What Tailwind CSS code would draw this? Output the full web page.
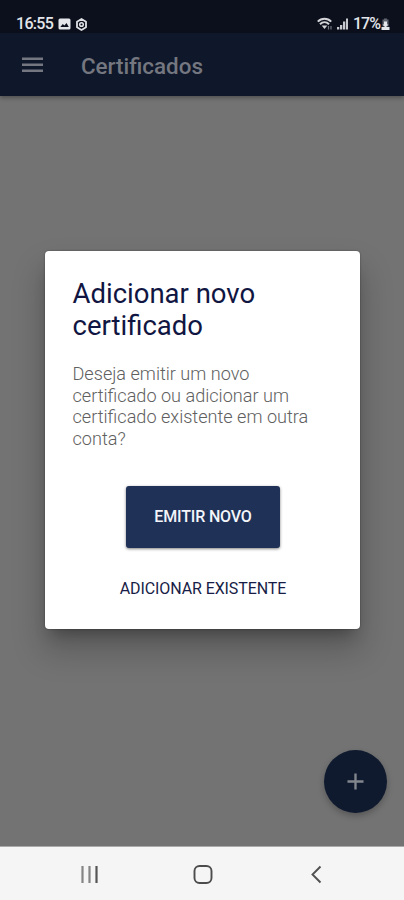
<!DOCTYPE html>
<html lang="pt-BR">
<head>
<meta charset="utf-8">
<meta name="viewport" content="width=device-width, initial-scale=1">
<title>Certificados</title>
<script src="https://cdn.jsdelivr.net/npm/@tailwindcss/browser@4"></script>
</head>
<body class="font-[Roboto,sans-serif]">
<div class="relative flex h-[900px] w-[404px] flex-col overflow-hidden bg-[#737373]">
  <div class="flex h-[33px] shrink-0 items-start justify-between bg-[#0b101c] pt-[14px] pr-[14px] pl-4 text-[#e4e6ea]">
    <div class="flex h-5 items-center">
      <span class="w-[38px] text-[16px] leading-5 font-medium tracking-[-0.7px] whitespace-nowrap">16:55</span>
      <svg class="ml-[4px]" width="13" height="12" viewBox="0 0 12 12"><rect width="12" height="11" y=".5" rx="1.5" fill="#e4e6ea"/><path d="M1.8 9 4.3 6l1.6 1.6L8 5l2.3 4z" fill="#0b101c"/></svg>
      <svg class="ml-[4px]" width="13" height="13" viewBox="0 0 13 13" fill="none" stroke="#dfe1e5"><path d="M6.5 1 11 3.7v5.6L6.5 12 2 9.3V3.7z" stroke-width="1.8" stroke-linejoin="round"/><circle cx="6.5" cy="6.5" r="1.8" stroke-width="1.5"/></svg>
    </div>
    <div class="flex h-5 items-center">
      <svg width="16" height="14" viewBox="0 0 16 14" fill="none" stroke="#d3d5d9" stroke-width="2"><path d="M.8 4.600C4.500 .800 10.500 .800 14.200 4.600M3 7.200c2.600-2.600 6.400-2.600 9 0"/><path d="M4.700 8.500h5.600L7.500 12z" fill="#d3d5d9" stroke="none"/><path d="M11.500 9v3.500M14 9v3.500" stroke="#70747e" stroke-width="1.200"/></svg>
      <svg class="ml-[4px]" width="11" height="12" viewBox="0 0 11 12" fill="#c8cad0"><path d="M0 9h2.300v2.500H0zM3 7h2.300v4.500H3zM6 3.500h2.300v8H6zM9 .5h2v11H9z"/></svg>
      <span class="ml-[5px] w-[28px] text-[16px] leading-5 font-medium tracking-[-1px] whitespace-nowrap">17%</span>
      <svg width="9" height="13" viewBox="0 0 9 13"><path d="M3 .5h3v1h1.500v7h-6v-7H3z" fill="#60646e"/><path d="M3 3.500h3v3h1.500L4.500 9.500l-3-3H3zM.5 9h8v3h-8z" fill="#e4e6ea"/></svg>
    </div>
  </div>
  <header class="flex h-[63px] shrink-0 items-center bg-[#0f182a] pt-px pl-[22px] shadow-[0_2px_4px_rgba(0,0,0,0.3)]">
    <svg width="21" height="16" viewBox="0 0 21 16" fill="#747780"><path d="M0 .5h21v2.500H0zM0 6.500h21V9H0zM0 12.500h21V15H0z"/></svg>
    <h1 class="ml-[38px] pt-px text-[22.4px] leading-7 font-medium text-[#747780]">Certificados</h1>
  </header>
  <main class="flex flex-1 justify-center pt-[155px]">
    <section class="flex h-[378px] w-[315px] flex-col items-center rounded-[4px] bg-white pt-[27px] pr-[26px] pl-[28px] shadow-[0_11px_15px_-7px_rgba(0,0,0,0.3),0_20px_32px_3px_rgba(0,0,0,0.2),0_0_2px_rgba(0,0,0,0.4)]">
      <h2 class="w-full text-[27.5px] leading-[32px] whitespace-nowrap text-[#101542]">Adicionar novo<br>certificado</h2>
      <p class="mt-[21px] w-full text-[18.1px] leading-[21.5px] font-light whitespace-nowrap text-[#606060]">Deseja emitir um novo<br>certificado ou adicionar um<br>certificado existente em outra<br>conta?</p>
      <button class="mt-[37px] h-[62px] w-[154px] rounded-[3px] bg-[#1f3157] text-[16px] font-medium tracking-[-0.15px] whitespace-nowrap text-[#f3f5fa] shadow-[0_1px_3px_rgba(0,0,0,0.5)]">EMITIR NOVO</button>
      <button class="mt-[31px] h-5 text-[16px] leading-5 tracking-[-0.1px] whitespace-nowrap text-[#171d46]">ADICIONAR EXISTENTE</button>
    </section>
  </main>
  <button class="absolute top-[750px] left-[324px] flex size-[63px] items-center justify-center rounded-full bg-[#0f1a2f] shadow-[0_3px_6px_rgba(0,0,0,0.25)]" aria-label="Adicionar">
    <svg width="17" height="17" viewBox="0 0 18 18" fill="none" stroke="#82868d" stroke-width="2.500"><path d="M9 .5v17M.5 9h17"/></svg>
  </button>
  <nav class="flex h-[54px] shrink-0 items-start border-t border-[#aaa] bg-[#f5f5f5] pt-[18px] pl-[80px]">
    <svg width="18" height="19" viewBox="0 0 18 19" fill="none" stroke-width="2.200"><path d="M2.500 1v17M9.500 1v17" stroke="#858585"/><path d="M16.500 1v17" stroke="#555"/></svg>
    <svg class="ml-[95px]" width="20" height="20" viewBox="0 0 20 20" fill="none" stroke="#4c4c4c" stroke-width="1.900"><rect x="1.500" y="1" width="17" height="17" rx="5"/></svg>
    <svg class="ml-[97px]" width="12" height="19" viewBox="0 0 12 19" fill="none" stroke="#505050" stroke-width="1.900"><path d="M10.500 1.500 2.500 9.500l8 8"/></svg>
  </nav>
</div>
</body>
</html>
